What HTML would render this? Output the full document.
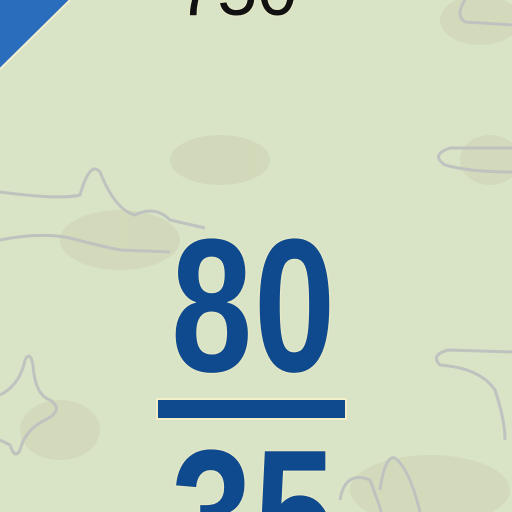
<!DOCTYPE html>
<html><head><style>
html,body{margin:0;padding:0;width:512px;height:512px;overflow:hidden;background:#d9e3c5;}
#w{position:relative;width:512px;height:512px;overflow:hidden}
svg{position:absolute;left:0;top:0}
.t{position:absolute;font-family:"Liberation Sans",sans-serif;font-weight:bold;transform-origin:0 0;white-space:nowrap;line-height:1}
</style></head><body><div id="w">
<svg width="512" height="512">
<g fill="#cfd6b6" opacity="0.7">
<ellipse cx="220" cy="160" rx="50" ry="25"/>
<ellipse cx="120" cy="240" rx="60" ry="30"/>
<ellipse cx="480" cy="20" rx="40" ry="25"/>
<ellipse cx="490" cy="160" rx="30" ry="25"/>
<ellipse cx="430" cy="490" rx="80" ry="35"/>
<ellipse cx="60" cy="430" rx="40" ry="30"/>
</g>
<g fill="none" stroke="#bfc3c0" stroke-width="3">
<path d="M0 192 Q60 200 80 195 Q90 160 100 172 Q115 210 135 215 Q155 205 170 220 L205 228"/>
<path d="M0 240 Q40 232 70 238 Q100 246 120 250 L170 252"/>
<path d="M512 148 L450 148 Q430 155 445 165 Q470 172 512 172"/>
<path d="M465 0 Q455 15 465 22 L512 25"/>
<path d="M512 352 L448 350 Q430 355 440 365 Q480 368 495 390 Q505 420 505 440"/>
<path d="M0 395 Q20 385 25 360 Q30 350 33 365 Q35 395 50 400 Q65 410 45 420 Q25 430 20 450 Q15 460 10 445 L0 440"/>
<path d="M340 500 Q345 470 370 480 Q385 520 380 512"/>
<path d="M380 490 Q385 455 395 458 Q410 470 420 512"/>
</g>
<path d="M0 0 L70 0 L0 69 Z" fill="#2b6dbd"/>
<path d="M70 0 L0 69" stroke="#f2f0d0" stroke-width="2"/>
<rect x="157" y="399" width="189" height="20" fill="#0e4a8d" stroke="#f2efc8" stroke-width="2"/>
</svg>
<div class="t" style="left:177px;top:-48px;font-size:76px;color:#111;font-weight:normal;transform:scaleX(0.95);text-shadow:0 0 2px #f5f0c8,0 0 2px #f5f0c8">750</div>
<div class="t" style="left:171px;top:211px;font-size:190px;color:#0e4a8d;transform:scaleX(0.77);letter-spacing:2px;text-shadow:0 0 2px #f5f0c8,0 0 2px #f5f0c8">80</div>
<div class="t" style="left:171px;top:422px;font-size:190px;color:#0e4a8d;transform:scaleX(0.77);letter-spacing:2px;text-shadow:0 0 2px #f5f0c8,0 0 2px #f5f0c8">35</div>
</div></body></html>
